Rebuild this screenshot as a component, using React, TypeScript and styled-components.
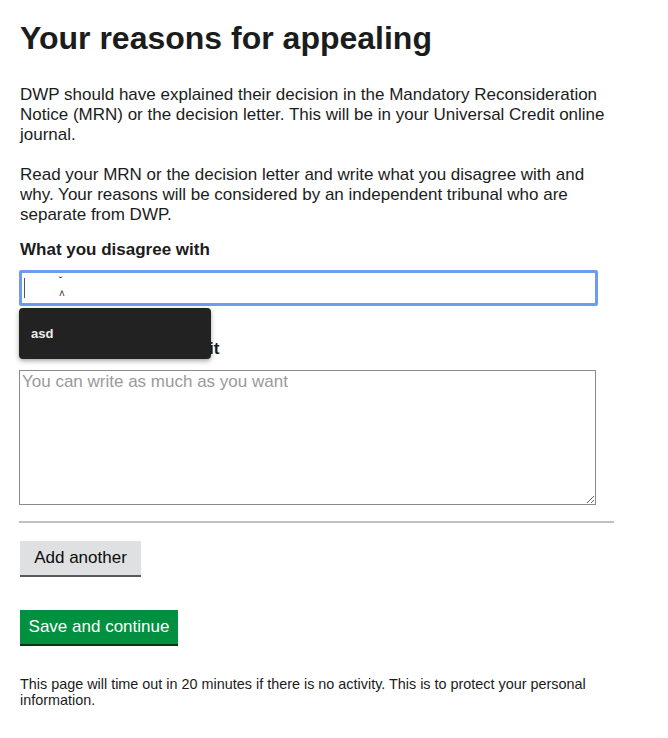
import React from "react";
import styled, { createGlobalStyle } from "styled-components";

const Global = createGlobalStyle`
  html, body { margin: 0; padding: 0; background: #fff; }
  body { font-family: "Liberation Sans", Arial, sans-serif; color: #0b0c0c; }
  * { box-sizing: border-box; }
`;

const Page = styled.main`
  width: 594px;
  margin-left: 19px;
  padding-top: 16px;
  padding-bottom: 30px;
`;

const Heading = styled.h1`
  font-size: 32px;
  line-height: 44px;
  font-weight: 700;
  margin: 0 0 0 1px;
  color: #1b1c1c;
`;

const Para = styled.p<{ $top?: number; $bottom?: number }>`
  font-size: 17px;
  line-height: 20px;
  margin: ${(p) => p.$top ?? 0}px 0 ${(p) => p.$bottom ?? 20}px 1px;
  width: 594px;
  color: #1b1c1c;
`;

const Field = styled.div<{ $top?: number }>`
  position: relative;
  display: flex;
  flex-direction: column;
  margin-top: ${(p) => p.$top ?? 0}px;
`;

const Label = styled.label<{ $gap?: number }>`
  font-size: 17px;
  line-height: 20px;
  font-weight: 700;
  margin: 0 0 ${(p) => p.$gap ?? 10}px 1px;
  color: #1b1c1c;
`;

const TextInput = styled.div`
  width: 579px;
  height: 36px;
  border: 3px solid #6c9ded;
  border-radius: 2px;
  background: #fff;
  position: relative;
`;

const Caret = styled.span`
  position: absolute;
  left: 2px;
  top: 5px;
  width: 1px;
  height: 20px;
  background: #555;
`;

const Marks = styled.span`
  position: absolute;
  left: 37px;
  top: 1px;
  font-size: 10px;
  line-height: 13px;
  color: #222;
  display: flex;
  flex-direction: column;
`;

const Suggestion = styled.div`
  position: absolute;
  left: 0;
  top: 68px;
  width: 192px;
  height: 51px;
  background: #222;
  border-radius: 4px;
  box-shadow: 0 2px 5px rgba(0, 0, 0, 0.35);
  color: #eee;
  font-size: 13px;
  font-weight: 700;
  display: flex;
  align-items: center;
  padding-left: 12px;
  z-index: 2;
`;

const TextArea = styled.textarea`
  width: 577px;
  height: 135px;
  border: 1px solid #8a8a8a;
  padding: 1px 2px;
  font-family: "Liberation Sans", Arial, sans-serif;
  font-size: 17px;
  line-height: 20px;
  color: #0b0c0c;
  resize: vertical;
  &::placeholder { color: #9a9a9a; }
`;

const Rule = styled.hr`
  border: 0;
  height: 2px;
  background: #bfc1c3;
  margin: 16px 0 0 0;
  width: 595px;
`;

const Button = styled.button<{ $primary?: boolean; $top: number; $width: number }>`
  display: block;
  margin: ${(p) => p.$top}px 0 0 1px;
  width: ${(p) => p.$width}px;
  height: 36px;
  border: 0;
  background: ${(p) => (p.$primary ? "#00903f" : "#dee0e2")};
  box-shadow: inset 0 -2px 0 ${(p) => (p.$primary ? "#003618" : "#58595b")};
  font-family: "Liberation Sans", Arial, sans-serif;
  font-size: 17px;
  color: ${(p) => (p.$primary ? "#fff" : "#0b0c0c")};
  padding: 0 0 3px 0;
`;

const Footer = styled.p`
  font-size: 14.4px;
  line-height: 16px;
  margin: 30px 0 0 1px;
  width: 594px;
  color: #1b1c1c;
`;

export default function App() {
  return (
    <>
      <Global />
      <Page>
        <Heading>Your reasons for appealing</Heading>
        <Para $top={25}>
          DWP should have explained their decision in the Mandatory Reconsideration Notice (MRN) or the
          decision letter. This will be in your Universal Credit online journal.
        </Para>
        <Para $bottom={15}>
          Read your MRN or the decision letter and write what you disagree with and why. Your reasons will be
          considered by an independent tribunal who are separate from DWP.
        </Para>
        <Field>
          <Label>What you disagree with</Label>
          <TextInput>
            <Caret />
            <Marks>
              <span>˘</span>
              <span>˄</span>
            </Marks>
          </TextInput>
          <Suggestion>asd</Suggestion>
        </Field>
        <Field $top={33}>
          <Label $gap={11}>Why you disagree with it</Label>
          <TextArea placeholder="You can write as much as you want" />
        </Field>
        <Rule />
        <Button $top={18} $width={121}>
          Add another
        </Button>
        <Button $primary $top={33} $width={158}>
          Save and continue
        </Button>
        <Footer>
          This page will time out in 20 minutes if there is no activity. This is to protect your personal
          information.
        </Footer>
      </Page>
    </>
  );
}
